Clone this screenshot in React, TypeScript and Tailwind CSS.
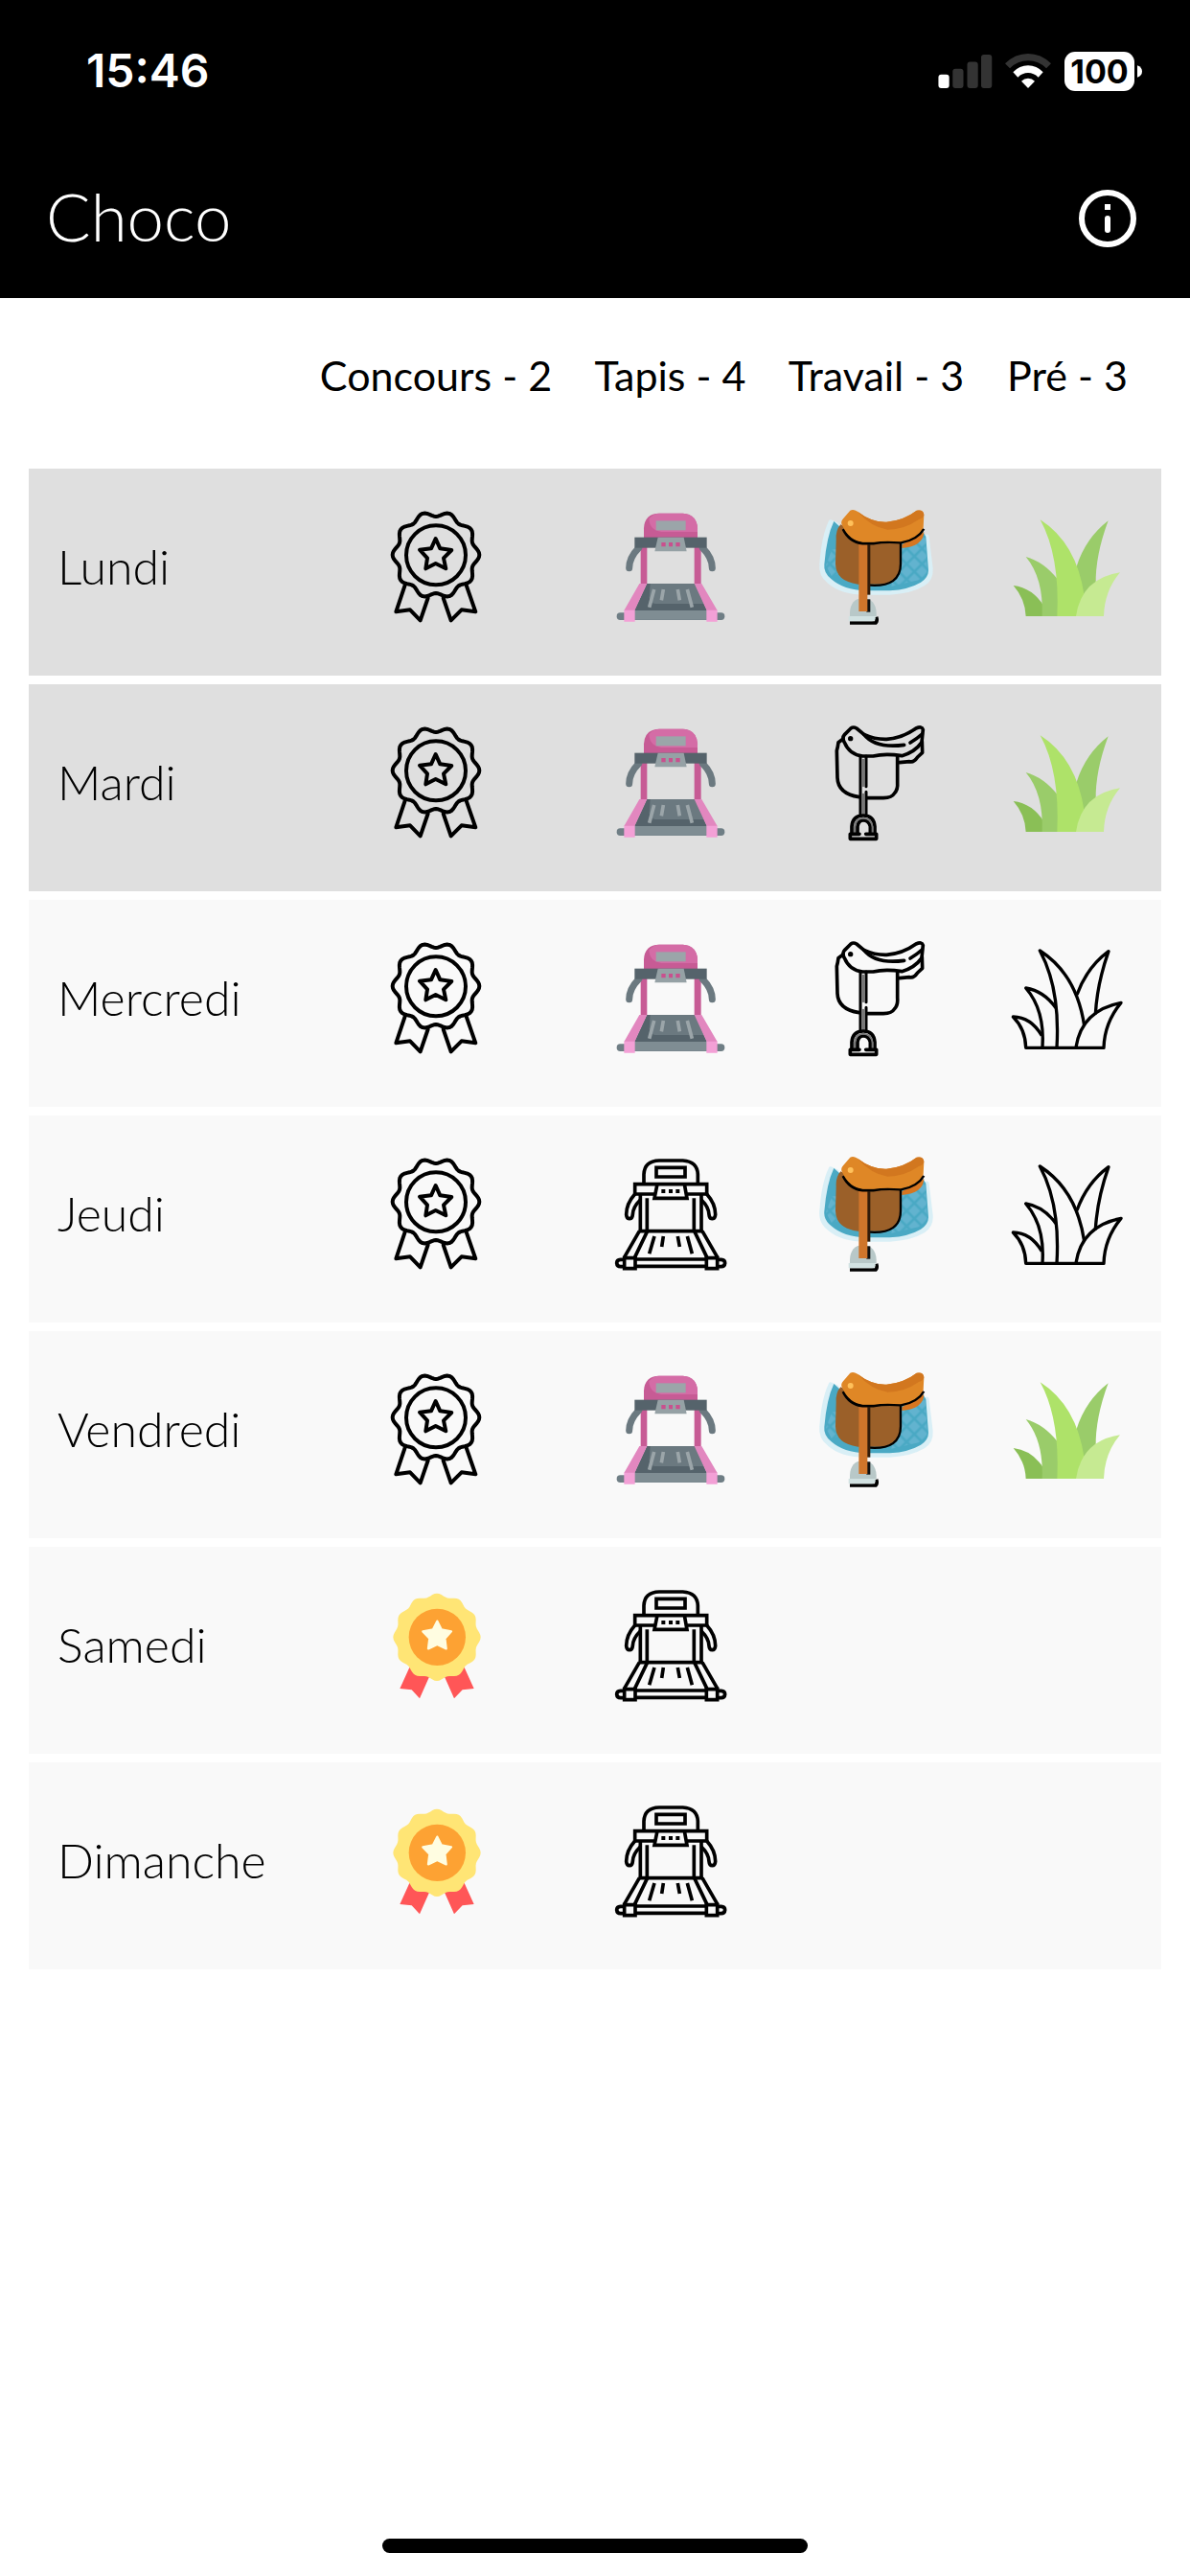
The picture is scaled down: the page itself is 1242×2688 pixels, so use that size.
import clsx from "clsx";
import React from "react";

type Activity = "concours" | "tapis" | "travail" | "pre";

const ACTIVITIES: { key: Activity; label: string }[] = [
  { key: "concours", label: "Concours" },
  { key: "tapis", label: "Tapis" },
  { key: "travail", label: "Travail" },
  { key: "pre", label: "Pré" },
];

// undefined = the activity is not offered on that day
type Day = { name: string; past?: boolean } & Partial<
  Record<Activity, boolean>
>;

const WEEK: Day[] = [
  { name: "Lundi", past: true, concours: false, tapis: true, travail: true, pre: true },
  { name: "Mardi", past: true, concours: false, tapis: true, travail: false, pre: true },
  { name: "Mercredi", concours: false, tapis: true, travail: false, pre: false },
  { name: "Jeudi", concours: false, tapis: false, travail: true, pre: false },
  { name: "Vendredi", concours: false, tapis: true, travail: true, pre: true },
  { name: "Samedi", concours: true, tapis: false },
  { name: "Dimanche", concours: true, tapis: false },
];

const COUNTS: Record<Activity, number> = {
  concours: 2,
  tapis: 4,
  travail: 3,
  pre: 3,
};

export default function App() {
  const [week, setWeek] = React.useState(WEEK);

  const toggle = (index: number, key: Activity) => {
    setWeek((days) =>
      days.map((day, i) => (i === index ? { ...day, [key]: !day[key] } : day)),
    );
  };

  return (
    <div className="flex flex-col min-h-screen bg-white text-black font-['Lato','Open_Sans',sans-serif]">
      <header className="bg-black text-white">
        <StatusBar />
        <div className="flex items-center justify-between h-[167px] pl-12 pr-[50px]">
          <h1 className="pb-1 text-[69px] leading-[80px] font-light">Choco</h1>
          <button type="button" aria-label="Informations">
            <InfoIcon />
          </button>
        </div>
      </header>
      <main className="grow px-[30px]">
        <table className="w-full table-fixed border-separate border-spacing-x-0 border-spacing-y-[9px]">
          <thead>
            <tr className="h-[160px] text-[43px] leading-[50px]">
              <td className="w-[282px]" />
              <th className="w-[286px] pb-4 font-normal">
                Concours - {COUNTS.concours}
              </th>
              <th className="w-[203px] pb-4 font-normal">
                Tapis - {COUNTS.tapis}
              </th>
              <th className="w-[227px] pb-4 font-normal">
                Travail - {COUNTS.travail}
              </th>
              <th className="w-[184px] pb-4 pr-3 font-normal">
                Pré - {COUNTS.pre}
              </th>
            </tr>
          </thead>
          <tbody>
            {week.map((day, i) => (
              <tr
                key={day.name}
                className={clsx(
                  "h-[216px]",
                  day.past ? "bg-[#dfdfdf]" : "bg-[#f9f9f9]",
                )}
              >
                <th
                  scope="row"
                  className="pl-[30px] pb-3 text-left text-[50px] leading-[58px] font-light"
                >
                  {day.name}
                </th>
                {ACTIVITIES.map(({ key, label }) => (
                  <td key={key} className="last:pr-3">
                    {day[key] !== undefined && (
                      <button
                        className="block mx-auto"
                        type="button"
                        aria-label={`${label} ${day.name}`}
                        aria-pressed={day[key]}
                        onClick={() => toggle(i, key)}
                      >
                        <ActivityIcon activity={key} active={!!day[key]} />
                      </button>
                    )}
                  </td>
                ))}
              </tr>
            ))}
          </tbody>
        </table>
      </main>
      {/* home indicator */}
      <div className="flex justify-center pb-6">
        <div className="w-[444px] h-[15px] rounded-full bg-black" />
      </div>
    </div>
  );
}

function StatusBar() {
  return (
    <div className="flex items-center justify-between h-36 pt-1 pl-[90px] pr-[50px] font-['Inter',sans-serif]">
      <span className="text-[48px] leading-[56px] font-semibold">15:46</span>
      <div className="flex items-center">
        <svg viewBox="0 0 170 106" className="w-[57px] h-[35px] mr-[13px]">
          <rect x="0" y="63" width="34" height="43" rx="9" fill="#fff" />
          <rect x="45" y="45" width="34" height="61" rx="9" fill="#333" />
          <rect x="91" y="23" width="34" height="83" rx="9" fill="#333" />
          <rect x="135" y="0" width="34" height="106" rx="9" fill="#333" />
        </svg>
        <svg viewBox="0 0 144 108" className="w-12 h-9 mr-[14px]">
          <path d="M0 31Q31 0 72 0T144 31L129 46Q105 22 72 22T15 46Z" fill="#333" />
          <path d="M25 58Q45 37 72 37T119 58L104 74Q90 60 72 60T40 74Z" fill="#fff" />
          <path d="M51 86Q60 77 72 77T93 86L72 108Z" fill="#fff" />
        </svg>
        <div className="flex items-center justify-center w-[73px] h-[41px] rounded-[11px] bg-white text-black text-[34px] leading-[41px] font-bold">
          100
        </div>
        <svg viewBox="0 0 16 40" className="w-[5px] h-[13px] ml-[3px]">
          <path d="M0 0Q16 6 16 20T0 40Z" fill="#fff" />
        </svg>
      </div>
    </div>
  );
}

function InfoIcon() {
  return (
    <svg viewBox="0 0 72 72" className="w-[72px] h-[72px]" fill="none" stroke="#fff">
      <circle cx="36" cy="36" r="27" strokeWidth="6" />
      <path d="M36 36V48" strokeWidth="6" strokeLinecap="round" />
      <path d="M33 24H39" strokeWidth="6" />
    </svg>
  );
}

function ActivityIcon({
  activity,
  active,
}: {
  activity: Activity;
  active: boolean;
}) {
  switch (activity) {
    case "concours":
      return active ? <MedalColor /> : <MedalOutline />;
    case "tapis":
      return active ? <TreadmillColor /> : <TreadmillOutline />;
    case "travail":
      return active ? <SaddleColor /> : <SaddleOutline />;
    case "pre":
      return active ? <GrassColor /> : <GrassOutline />;
  }
}

const ICON_CLASS = "w-[150px] h-[150px]";

// closed wavy ring around (cx, cy)
function rosette(cx: number, cy: number, r: number, wave: number, count: number) {
  const points: string[] = [];
  for (let deg = 0; deg < 360; deg += 3) {
    const a = (deg * Math.PI) / 180;
    const radius = r + wave * Math.cos(count * a);
    const x = cx + radius * Math.cos(a);
    const y = cy + radius * Math.sin(a);
    points.push(`${x.toFixed(1)} ${y.toFixed(1)}`);
  }
  return `M${points.join("L")}Z`;
}

function MedalOutline() {
  return (
    <svg
      viewBox="-30 36 450 450"
      className={ICON_CLASS}
      fill="none"
      stroke="#000"
      strokeWidth="12"
      strokeLinejoin="round"
      strokeLinecap="round"
    >
      <path d={rosette(195, 207, 128, 8, 10)} />
      <circle cx="195" cy="208" r="93" />
      <path d="M194 156L208 187L244 192L219 217L226 250L194 234L163 250L168 217L144 191L180 187Z" />
      <path d="M98 302L70 385L114 379L146 412L170 342" />
      <path d="M290 302L319 385L275 379L242 412L218 342" />
    </svg>
  );
}

function MedalColor() {
  return (
    <svg viewBox="-30 21 450 450" className={ICON_CLASS}>
      <path d="M112 300L82 366L119 370L144 397L176 325ZM284 300L314 366L278 370L252 397L220 325Z" fill="#ff5657" />
      <path d={rosette(198, 205, 132, 5, 12)} fill="#ffe575" />
      <circle cx="199" cy="205" r="89" fill="#fda233" />
      <path
        d="M199 155L212 181L243 187L223 209L227 241L199 228L171 241L175 209L154 187L186 181Z"
        fill="#fffde1"
        stroke="#fffde1"
        strokeWidth="7"
        strokeLinejoin="round"
      />
    </svg>
  );
}

function TreadmillColor() {
  return (
    <svg viewBox="-1 36 450 450" className={ICON_CLASS}>
      <path d="M130 180H150V300H130ZM298 180H319V300H298Z" fill="#c75b95" />
      <path d="M124 185Q94 215 94 248M324 185Q354 215 354 248" fill="none" stroke="#6b7980" strokeWidth="21" strokeLinecap="round" />
      <path d="M140 153V124Q142 78 188 77H262Q306 80 308 124V153Z" fill="#c75b95" />
      <path d="M156 94Q170 77 188 77H262Q306 80 308 124V135H195Q158 130 156 94Z" fill="#d46ca6" />
      <rect x="178" y="100" width="93" height="30" fill="#9ba5a9" />
      <rect x="111" y="152" width="226" height="33" fill="#55636b" />
      <path d="M184 152H265L274 196H174Z" fill="#95a1a5" />
      <path d="M195 168H208V181H195ZM218 168H230V181H218ZM240 168H253V181H240Z" fill="#c9508e" />
      <path d="M149 297H300L338 382H110Z" fill="#55636b" />
      <path d="M160 297H300L328 360H175Q158 358 157 340Z" fill="#6b7980" />
      <path d="M172 315L157 371M201 315L195 349M246 315L252 349M276 315L291 371" stroke="#9ba5a9" strokeWidth="11" />
      <rect x="55" y="388" width="338" height="23" rx="11" fill="#6f7e85" />
      <rect x="105" y="381" width="238" height="29" fill="#7f8d93" />
      <path d="M126 297H150L111 381H78ZM298 297H321L370 381H337Z" fill="#e287bf" />
      <path d="M78 380H112V416H78ZM336 380H370V416H336Z" fill="#f3a0d6" />
    </svg>
  );
}

function TreadmillOutline() {
  return (
    <svg viewBox="-1 21 450 450" className={ICON_CLASS} fill="none" stroke="#000" strokeWidth="11">
      <path d="M140 132V106Q142 64 188 63H262Q307 66 309 106V132" />
      <path d="M179 85H269V114H179Z" />
      <path d="M182 137H112V168H176M267 137H337V168H274M182 137H267L275 181H173Z" />
      <path d="M195 159H207M218 159H230M240 159H252" strokeWidth="12" />
      <path d="M129 168V285M150 181V285M297 181V285M320 168V285" />
      <path d="M112 168Q85 198 85 232Q86 245 95 245Q104 245 105 232Q106 208 129 186" />
      <path d="M337 168Q364 198 364 232Q363 245 354 245Q345 245 344 232Q343 208 320 186" />
      <path d="M124 284H325" />
      <path d="M126 284L78 367M151 284L111 367M298 284L338 367M323 284L371 367" />
      <path d="M173 300L157 355M201 300L196 333M246 300L252 333M276 300L291 355" />
      <path d="M79 368H113V401H79ZM336 368H370V401H336ZM113 372H336M113 394H336" />
      <path d="M79 373H67Q55 374 55 384Q56 395 67 395H79M370 373H382Q394 374 394 384Q393 395 382 395H370" />
    </svg>
  );
}

function SaddleColor() {
  return (
    <svg viewBox="-1 36 450 450" className={ICON_CLASS}>
      <defs>
        <pattern id="quilt" width="34" height="34" patternUnits="userSpaceOnUse" patternTransform="rotate(45 332 210)">
          <rect width="34" height="34" fill="#4aa9c4" />
          <rect x="4" y="4" width="26" height="26" fill="#62b3cf" />
        </pattern>
      </defs>
      <path
        d="M80 104L98 112L120 160H340L381 150L393 250Q395 282 370 298Q330 322 265 325H190Q115 325 75 290Q48 270 52 235Q58 150 80 104Z"
        fill="#d9eff6"
        stroke="#d9eff6"
        strokeWidth="14"
        strokeLinejoin="round"
      />
      <path d="M90 102L110 120H360L378 150L386 255Q386 278 362 293Q325 315 265 319H190Q120 317 82 283Q57 263 60 237Q67 150 90 102Z" fill="#4aa9c4" />
      <path d="M298 172L376 152L382 255Q378 275 355 286L270 305ZM84 190H105V265L84 276L65 240Z" fill="url(#quilt)" />
      <path d="M303 175L372 135Q370 180 303 186Z" fill="#d67621" />
      <path d="M111 112Q95 130 97 160L95 235Q96 290 165 299H250Q298 288 298 235V170L190 150Z" fill="#9b6029" />
      <path d="M203 302Q299 308 299 235V170" fill="none" stroke="#000" strokeWidth="7" />
      <path d="M198 175V332" stroke="#321b0a" strokeWidth="12" />
      <path d="M140 400V388Q142 345 180 342Q221 345 223 388V400Z" fill="#b8c8c8" />
      <path d="M198 346V386" stroke="#111" strokeWidth="12" />
      <path d="M168 168H195V384H168Z" fill="#cf752b" />
      <path d="M140 420H221Q227 414 223 401" fill="none" stroke="#000" strokeWidth="11" strokeLinejoin="round" />
      <path d="M136 399H220V407Q217 415 209 415H136Z" fill="#d2e2e2" />
      <path d="M119 126Q138 166 180 171H213Q250 164 300 168Q352 158 371 125" fill="none" stroke="#000" strokeWidth="9" />
      <path d="M141 68Q151 63 164 71Q209 106 255 104Q309 99 349 68Q371 64 372 82L370 122Q350 157 299 166Q250 162 215 167H181Q137 161 117 116Q109 105 119 94Z" fill="#df8726" />
      <path d="M164 71Q209 106 255 104Q309 99 349 68Q371 64 372 82Q370 93 356 96Q310 128 258 128Q205 119 164 71Z" fill="#d2771f" />
      <circle cx="142" cy="108" r="9" fill="#ffc15b" />
    </svg>
  );
}

function SaddleOutline() {
  return (
    <svg
      viewBox="-1 36 450 450"
      className={ICON_CLASS}
      fill="none"
      stroke="#000"
      strokeWidth="11"
      strokeLinejoin="round"
      strokeLinecap="round"
    >
      <path d="M124 94L143 75Q151 69 161 75L184 94Q219 110 255 109Q306 105 347 75Q366 67 369 79L365 119Q343 150 303 161Q250 153 213 162H180Q139 158 123 119Q114 105 124 94Z" />
      <path d="M184 94Q220 139 310 127M329 120Q352 106 366 93" />
      <circle cx="142" cy="107" r="8" fill="#000" stroke="none" />
      <path d="M119 108L104 119Q102 135 99 145L101 230Q103 280 169 290M195 293H245Q272 292 279 279Q291 267 289 245V165" />
      <path d="M366 116L367 151L352 165Q340 183 327 179L295 182" />
      <path d="M173 162V345M191 162V257M191 274V345" strokeWidth="9" />
      <path d="M182 174V255M182 282V345" stroke="#777" strokeWidth="7" />
      <path d="M146 403V382Q149 348 182 348Q215 348 218 382V403M164 403V382Q167 363 182 363Q199 363 204 382V403" />
      <path d="M155 402V384Q157 356 182 356Q207 356 211 384V402" stroke="#777" strokeWidth="6" />
      <path d="M170 406H141V421H223V406H190" />
    </svg>
  );
}

function GrassColor() {
  return (
    <svg viewBox="-6 36 450 450" className={ICON_CLASS}>
      <path d="M50 303Q110 310 146 368V399H89Q87 345 50 303Z" fill="#8abf56" />
      <path d="M89 213Q145 228 190 285V399H140Q145 280 89 213Z" fill="#9acc6a" />
      <path d="M347 100Q276 155 248 243L270 335L308 300Q306 210 347 100Z" fill="#9acc6a" />
      <path d="M134 97Q248 170 272 335L250 399H187Q196 210 134 97Z" fill="#aee269" />
      <path d="M384 262Q264 280 246 399H333Q335 320 384 262Z" fill="#c6ea92" />
    </svg>
  );
}

function GrassOutline() {
  return (
    <svg
      viewBox="-6 6 450 450"
      className={ICON_CLASS}
      fill="none"
      stroke="#000"
      strokeWidth="10"
      strokeLinejoin="round"
    >
      <path d="M139 332Q105 274 49 273Q88 312 89 370H333Q335 292 387 229Q264 253 246 368" />
      <path d="M141 369Q149 252 89 183Q145 192 183 245" />
      <path d="M186 369Q197 184 133 66Q248 140 272 301" />
      <path d="M249 204Q280 118 348 68Q312 170 307 265" />
    </svg>
  );
}
